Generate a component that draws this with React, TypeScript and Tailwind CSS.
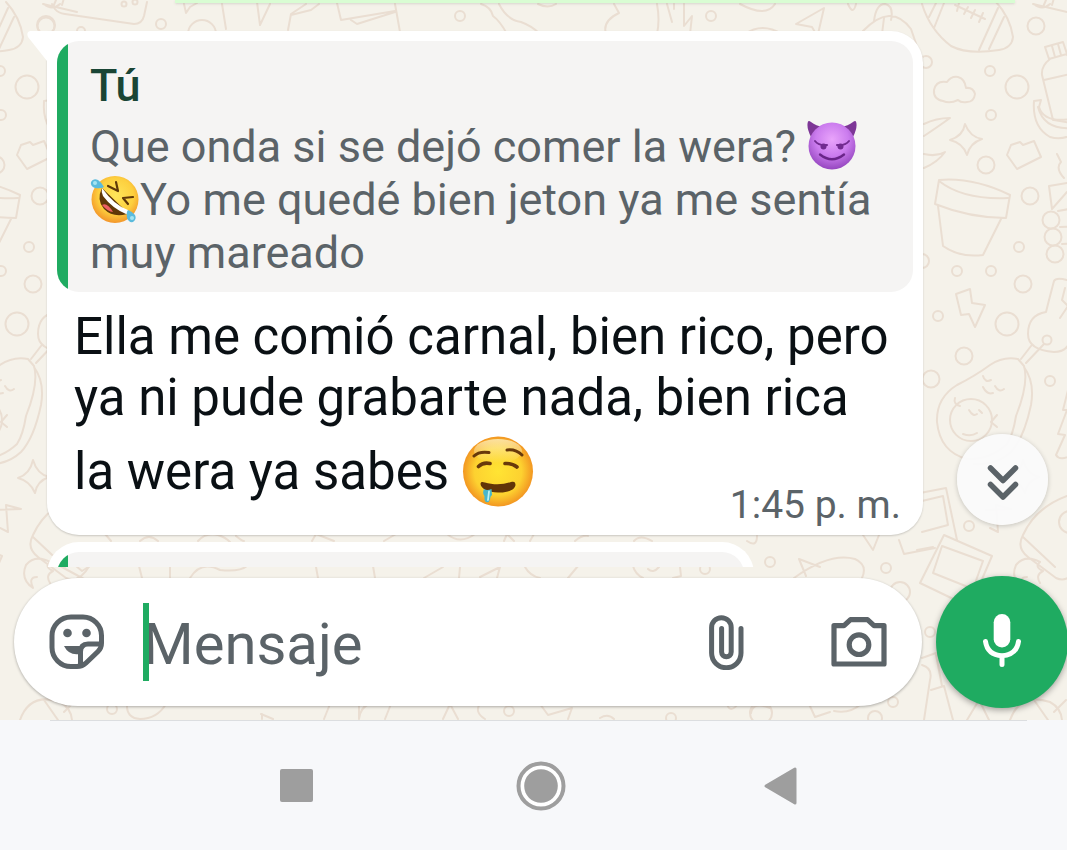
import React from "react";

function Doodles() {
  return (
    <g id="doodles">
      {/* top strip */}
      <path d="M52 4 55 9Q58 13 65 14L134 24Q142 24 144 16L147 2M184 4 186 13 190 7 197 3M222 4 226 29M257 2 260 25 270 4M288 30 291 14 306 4M291 15 311 10 319 4M337 3 341 20 395 11M351 20 357 24 395 12M395 4 400 32" />
      <circle cx="46" cy="25" r="9" />
      <circle cx="81" cy="31" r="4" />
      <circle cx="161" cy="24" r="5" />
      <circle cx="202" cy="34" r="14" />
      <circle cx="124" cy="4" r="2.5" />
      <circle cx="135" cy="2" r="2.5" />
      <circle cx="460" cy="16" r="5" />
      <path d="M481 4Q491 7 493 16 500 21 507 34M499 4Q507 20 521 22 532 26 540 34M538 4Q548 9 556 4M614 4 619 13Q602 21 606 34M657 4Q660 20 657 34M667 4 672 22M674 4 674 9M684 4 684 26 692 16 690 34M740 4Q766 18 775 4M745 34Q762 22 782 34M816 34 812 27 796 24 824 8 818 34M848 4Q853 16 856 4M863 31Q891 2 911 29L922 61M874 21Q876 4 885 4 894 6 891 20M884 18 882 34" />
      <circle cx="711" cy="16" r="5" />

      {/* rugby ball */}
      <path d="M922 4Q930 30 951 46 968 55 999 50 1012 48 1013 37 1010 17 996 2M929 17 936 3M934 28 944 3M979 50 998 8M989 49 1004 17M955 5 985 19M957 11 959 3M964 14 968 7M971 18 975 10M979 22 983 13" />
      <path d="M1034 4Q1042 11 1050 4M1033 4 1067 12M1046 0 1043 7M1054 -2 1052 5" />
      <circle cx="1036" cy="26" r="8.5" />
      <circle cx="990" cy="71" r="5" />
      <circle cx="926" cy="62" r="6" />
      <circle cx="1017" cy="87" r="11.5" />
      <circle cx="991" cy="115" r="5" />
      <circle cx="986" cy="165" r="8.5" />
      <circle cx="1030" cy="196" r="8.5" />
      <circle cx="1019" cy="247" r="5" />
      <circle cx="957" cy="271" r="5" />
      <circle cx="991" cy="271" r="5" />
      <circle cx="1023" cy="284" r="8.5" />
      <circle cx="922" cy="261" r="7" />
      {/* cloud */}
      <path d="M943 101Q933 99 934 90 936 80 947 82 951 76 958 77 965 79 966 88 973 87 975 94 974 102 967 102 961 103 958 100 950 104 943 101Z" />
      {/* bottle */}
      <path d="M1045 47 1063 42 1067 54 1049 59ZM1052 46 1055 57M1058 44 1061 55M1050 59Q1041 66 1042 75L1053 120M1067 55 1078 62M1044 80 1075 73M1054 120 1078 124" />
      {/* bananas */}
      <path d="M1034 101 1041 100 1039 107Q1044 123 1070 119M1034 101Q1032 127 1050 137 1064 141 1076 132M1038 107Q1044 130 1072 128" />
      {/* leaf, star, film */}
      <path d="M924 124Q936 118 950 118 939 126 924 136M924 154Q936 157 945 152 938 162 924 168" />
      <path d="M965 124Q970 137 982 139 970 143 967 155 963 143 950 140 963 136 965 124Z" />
      <path d="M1011 145 1020 142 1023 145 1034 141 1041 157 1017 169 1007 155ZM1057 154 1061 162Q1055 168 1064 178" />
      {/* flower pot */}
      <path d="M939 180Q973 177 1010 195L1006 218Q970 218 935 204ZM939 181Q963 200 1008 198M938 206 943 246Q960 258 983 255L1001 219" />
      {/* logs */}
      <path d="M1049 186 1067 183M1049 186 1052 209 1067 192M1058 211 1080 207M1060 227 1080 226M1062 244 1080 243" />
      <circle cx="1051" cy="220" r="8.5" />
      <circle cx="1053" cy="237" r="8.5" />
      <circle cx="1055" cy="254" r="8.5" />
      <path d="M1049 300 1054 281Q1056 277 1067 280M1065 288 1062 300 1068 306 1060 318" />
      {/* lightning */}
      <path d="M956 294 970 289 972 303 985 305 975 327 969 314 961 315Z" />
      <circle cx="938" cy="316" r="5" />
      <circle cx="1007" cy="324" r="11.5" />
      <circle cx="964" cy="356" r="8.5" />
      <circle cx="931" cy="379" r="8.5" />
      <circle cx="1050" cy="381" r="5" />
      {/* tag */}
      <path d="M1049 300 1046 312Q1028 315 1028 334 1028 350 1054 352 1066 352 1070 342M1044 344 1026 363M1031 346 1021 359" />
      <circle cx="1047" cy="340" r="4.5" />
      {/* avocado */}
      <path d="M1018 359Q1003 356 990 365 975 376 957 385 936 398 937 422 940 452 967 459 990 460 1007 444 1013 435 1016 416 1029 383 1024 366ZM1024 367Q1035 382 1031 405 1024 438 1011 452 996 466 974 464" />
      <circle cx="971" cy="420" r="21" />
      <path d="M983 376Q985 383 991 380M995 386Q999 393 1004 389M983 387Q987 395 993 393M969 410Q973 417 977 414M979 410 982 413M963 434Q971 437 977 433M955 398Q953 404 960 406M997 415 991 422 997 427" />
      {/* fir */}
      <path d="M1068 390 1063 410 1067 410 1058 434 1065 435 1056 455Q1060 462 1074 454" />
      <path d="M1023 460Q1027 474 1039 477 1027 481 1025 493 1020 481 1008 478 1020 474 1023 460ZM990 528 998 532 996 505 1011 509 986 510" />
      <circle cx="969" cy="526" r="5" />
      {/* photos */}
      <path d="M920 493 946 488 957 540M922 501 943 496 948 525 922 532M917 550 933 547M944 535 992 556 970 607 920 583ZM942 546 983 561 973 589 933 573Z" />
      {/* rocket */}
      <path d="M1023 535Q1035 508 1067 496M1023 535Q1016 548 1028 557L1056 578Q1069 584 1080 565M1023 537 1055 567M1016 565Q1025 554 1040 562 1034 567 1043 571 1035 575 1040 583M1016 565Q1010 579 1023 588 1018 577 1027 577" />
      <circle cx="1070" cy="522" r="11" />

      {/* bottom strip */}
      <path d="M98 530 106 535 111 541M140 541Q149 533 158 541M198 541Q206 532 218 535 225 537 230 542M236 536Q242 541 244 541M312 541 316 534 334 541M384 541 396 534M447 534Q460 545 475 534M504 541 507 534 514 541M530 541 534 534M575 541Q582 535 588 536M634 541Q640 534 652 541M747 541Q757 548 757 536M863 535 873 550 879 535M899 540 904 554 935 548" />
      <path d="M60 566 84 579M76 566 82 571 90 566M139 566 142 578M170 566V578M190 578Q201 560 220 570 240 572 247 566M316 567 318 578M373 566 375 578M424 578 443 567M460 567 459 578M480 577 500 567 497 578M525 567Q530 576 540 578M568 578 578 566M633 566Q635 574 643 578M648 569Q653 574 659 567M673 578 681 576 680 567M794 578Q830 552 855 559 868 565 862 578M806 576 799 559 820 567" />
      <circle cx="770" cy="562" r="5" />
      <circle cx="705" cy="569" r="5" />
      <circle cx="886" cy="568" r="5" />
      <circle cx="900" cy="592" r="10" />
      <circle cx="930" cy="632" r="5" />
      <path d="M922 658 936 653M922 665Q933 668 930 680L924 720M931 690 944 686 953 720M936 655 942 686M967 720 979 700 989 720M1010 720Q1020 692 1050 702 1061 708 1062 720M1034 700 1048 720M1066 700 1054 712" />
      <path d="M127 704Q126 718 140 719 157 719 166 704M261 714 273 719M262 714V719M330 704 324 719M359 704V719M359 719Q360 708 369 704M385 719 391 704M443 719 450 704 458 719M480 704Q474 712 485 719M540 704 548 715 572 708 568 719M600 718Q608 713 614 719M727 704Q730 714 738 704M751 713Q753 701 770 708M809 704 815 717 830 712M834 711Q850 714 861 704" />
      <circle cx="112" cy="709" r="5" />
      <circle cx="509" cy="711" r="5" />
      <circle cx="671" cy="718" r="5" />
      <circle cx="761" cy="713" r="11" />
      <circle cx="893" cy="702" r="5" />
      <circle cx="875" cy="718" r="7" />
    </g>
  );
}

function Wallpaper() {
  return (
    <svg
      className="absolute inset-0 h-full w-full"
      viewBox="0 0 1067 720"
      preserveAspectRatio="xMidYMid slice"
      fill="none"
      stroke="#eaded2"
      strokeWidth="2"
      strokeLinecap="round"
      strokeLinejoin="round"
      aria-hidden="true"
    >
      <Doodles />
      <use href="#doodles" x="-990" />
    </svg>
  );
}

function DevilEmoji() {
  return (
    <svg className="-mb-2 inline-block size-[50px] align-baseline" viewBox="0 0 50 50" role="img" aria-label="😈">
      <defs>
        <radialGradient id="devil" cx="50%" cy="36%" r="64%">
          <stop offset="0" stopColor="#e9a4fb" />
          <stop offset="0.55" stopColor="#cb7cee" />
          <stop offset="1" stopColor="#9546bf" />
        </radialGradient>
      </defs>
      <path d="M4 17Q-1 7 1 1.500 2 .5 4 2 9 6 16 7ZM46 17Q51 7 49 1.500 48 .5 46 2 41 6 34 7Z" fill="#7d3696" />
      <circle cx="25" cy="26" r="23.500" fill="url(#devil)" />
      <path d="M8 21Q12 26 20 25M42 21Q38 26 30 25" fill="none" stroke="#722b90" strokeWidth="2" strokeLinecap="round" />
      <circle cx="16.500" cy="26.500" r="3" fill="#722b90" />
      <circle cx="33.500" cy="26.500" r="3" fill="#722b90" />
      <path d="M13 34.500Q25 44 37 34.500" fill="none" stroke="#6a2489" strokeWidth="2.400" strokeLinecap="round" />
    </svg>
  );
}

function RoflEmoji() {
  return (
    <svg className="-mb-[9px] inline-block size-[50px] align-baseline" viewBox="0 0 50 50" role="img" aria-label="🤣">
      <defs>
        <radialGradient id="rofl" cx="52%" cy="42%" r="58%">
          <stop offset="0" stopColor="#ffe65a" />
          <stop offset="0.65" stopColor="#fdcf3e" />
          <stop offset="1" stopColor="#f3962a" />
        </radialGradient>
      </defs>
      <circle cx="25" cy="25.500" r="23.500" fill="url(#rofl)" />
      <path d="M12 14Q6 26 14 35 23 44 37 40 40 39 37 38Z" fill="#603808" />
      <path d="M12 14Q11 18 13 22 22 34 36 40 41 40 38 36 24 31 12 14Z" fill="#fff" />
      <path d="M12 31Q17 28 23 38 18 38 12 31Z" fill="#ee5f63" />
      <path d="M18 12 28 17 26 8M43 23 33 24 38 30" fill="none" stroke="#603808" strokeWidth="2.200" strokeLinecap="round" strokeLinejoin="round" />
      <path d="M14 13Q11 15 5 14 0 12 1 8 3 4 8 6 11 8 14 13Z" fill="#5bbbdc" />
      <path d="M38 36Q36 38 37 44 39 49 43 48 47 45 45 41 43 38 38 36Z" fill="#5bbbdc" />
      <circle cx="5" cy="9" r="2" fill="#a4e4f2" />
      <circle cx="42" cy="44" r="2" fill="#a4e4f2" />
    </svg>
  );
}

function DroolEmoji() {
  return (
    <svg className="-mb-[19px] mt-2 inline-block size-[72px] align-baseline" viewBox="0 0 72 72" role="img" aria-label="🤤">
      <defs>
        <radialGradient id="drool" cx="50%" cy="50%" r="52%">
          <stop offset="0" stopColor="#ffe433" />
          <stop offset="0.65" stopColor="#fdd130" />
          <stop offset="1" stopColor="#f18f20" />
        </radialGradient>
        <linearGradient id="shine" x1="0" y1="0" x2="0" y2="1">
          <stop offset="0" stopColor="#fff6c8" stopOpacity="0.75" />
          <stop offset="1" stopColor="#fff6c8" stopOpacity="0" />
        </linearGradient>
      </defs>
      <circle cx="36" cy="35.500" r="35" fill="url(#drool)" />
      <ellipse cx="36" cy="15" rx="24" ry="12" fill="url(#shine)" />
      <g fill="none" stroke="#68390b" strokeLinecap="round">
        <path d="M12 20Q17 15 27 16.500M45 14Q54 13 60 19" strokeWidth="3" />
        <path d="M16.500 30.500Q21 26 28 27.500M43 27.500Q50 27 55 31" strokeWidth="3.600" />
      </g>
      <path d="M18.500 48C18.500 45.500 20.500 45.500 23 46.500 31 49 41 49 49 46 52 45 53.500 46 53.500 49 53 54 45 57 36 56.500 26 56 19 53 18.500 48Z" fill="#623408" />
      <path d="M22 53Q25 55 29.500 53L30 59Q28 60 28 63.500 27 67 24 66 22 65 22.500 60 20 57 22 53Z" fill="#48b6cc" />
      <path d="M27 55.500 26 64" stroke="#bdf0f2" strokeWidth="1.800" strokeLinecap="round" />
    </svg>
  );
}

function StickerIcon() {
  return (
    <svg className="size-[56px]" viewBox="0 0 56 56" fill="none" stroke="#5b6368" strokeWidth="5" aria-hidden="true">
      <path d="M22 3H34A18.500 18.500 0 0 1 52.500 21.500V29Q52.500 34 49 37.500L37 49Q33.500 52.500 28 52.500H22A19 19 0 0 1 3 33.500V22A19 19 0 0 1 22 3Z" />
      <path d="M52 30H39Q31.500 30 31.500 38V52" />
      <circle cx="18.500" cy="19" r="4.300" fill="#5b6368" stroke="none" />
      <circle cx="37.500" cy="19" r="4.300" fill="#5b6368" stroke="none" />
      <path d="M15 32H35L31 40Q20 42 15 32Z" fill="#5b6368" stroke="none" />
    </svg>
  );
}

function ClipIcon() {
  return (
    <svg className="size-[56px]" viewBox="-9 0 56 56" fill="none" stroke="#5b6368" strokeWidth="5" strokeLinecap="round" aria-hidden="true">
      <path d="M34 14.500V39A14.700 14.700 0 0 1 4.600 39V13.500A9.800 9.800 0 0 1 24.200 13.500V38A4.800 4.800 0 0 1 14.600 38V14.500" />
    </svg>
  );
}

function CameraIcon() {
  return (
    <svg className="size-[56px]" viewBox="0 -2 56 56" fill="none" stroke="#5b6368" strokeWidth="5.200" strokeLinejoin="round" aria-hidden="true">
      <path d="M3 9.700H13L19.500 3.700H36.500L43 9.700H53V48H3Z" />
      <circle cx="28" cy="28.700" r="9.800" />
    </svg>
  );
}

export default function App() {
  return (
    <div className="flex h-screen flex-col overflow-hidden bg-[#f7f8fa] font-['Roboto','Noto_Sans',sans-serif]">
      <main className="relative flex min-h-0 flex-1 flex-col overflow-hidden bg-[#f5f2ea]">
        <Wallpaper />

        <section className="relative min-h-0 flex-1 overflow-hidden" aria-label="Conversación">
          <div className="ml-[175px] mr-[52px] h-[3px] bg-[#d9fdd3] shadow-sm" />

          <article className="relative ml-[47px] mr-[144px] mt-7 rounded-[32px] rounded-tl-none bg-white px-[10px] pb-[6px] pt-[10px] shadow-[0_1px_2px_rgba(0,0,0,0.18)]">
            <svg className="absolute -left-5 top-0 h-8 w-6" viewBox="0 0 24 32" fill="#fff" aria-hidden="true">
              <path d="M24 0H3Q-1 1 1 6L20 30 24 32Z" />
            </svg>
            <blockquote className="flex overflow-hidden rounded-[22px] bg-[#f5f4f3] text-[45px] leading-[53px] text-[#5b6368]">
              <span className="w-[11px] shrink-0 bg-[#1fab61]" />
              <div className="min-w-0 flex-1 pb-[13px] pl-[22px] pr-7 pt-[18px]">
                <p className="mb-2 font-medium text-[#1a4535]">Tú</p>
                <p>
                  Que onda si se dejó comer la wera? <DevilEmoji />
                  <br />
                  <RoflEmoji />
                  Yo me quedé bien jeton ya me sentía muy mareado
                </p>
              </div>
            </blockquote>
            <div className="mt-[14px] grid">
              <p className="col-start-1 row-start-1 pb-[27px] pl-[17px] text-[51px] leading-[61px] text-[#0a1014]">
                Ella me comió carnal, bien rico, pero
                <br />
                ya ni pude grabarte nada, bien rica
                <br />
                la wera ya sabes <DroolEmoji />
              </p>
              <time className="col-start-1 row-start-1 self-end justify-self-end pr-3 text-[39px] leading-[48px] text-[#5b6368]">
                1:45 p. m.
              </time>
            </div>
          </article>

          <article className="ml-[47px] mt-[7px] h-32 w-[707px] max-w-full rounded-[32px] bg-white p-[10px]">
            <div className="flex h-full overflow-hidden rounded-[22px] bg-[#f5f4f3]">
              <span className="w-[11px] shrink-0 bg-[#1fab61]" />
            </div>
          </article>
        </section>

        <button
          type="button"
          aria-label="Ir al final"
          className="absolute bottom-[195px] right-[19px] flex size-[91px] items-center justify-center rounded-full bg-[#fafafb]/95 shadow-[0_1px_5px_rgba(0,0,0,0.2)]"
        >
          <svg className="size-[91px]" viewBox="0 0 91 91" fill="none" stroke="#5b6368" strokeWidth="5.500" strokeLinecap="round" strokeLinejoin="round" aria-hidden="true">
            <path d="M33.500 34 46 46.500 58.500 34M33.500 50.500 46 63 58.500 50.500" />
          </svg>
        </button>

        <form className="relative -mr-px flex items-center gap-[14px] pb-3 pl-[14px] pt-[9px]">
          <div className="flex h-32 min-w-0 flex-1 items-center rounded-full bg-white px-[35px] shadow-[0_1px_3px_rgba(0,0,0,0.3)]">
            <button type="button" aria-label="Stickers" className="shrink-0">
              <StickerIcon />
            </button>
            <div className="relative ml-[38px] min-w-0 flex-1">
              <input
                type="text"
                aria-label="Mensaje"
                placeholder="Mensaje"
                className="block h-[78px] w-full bg-transparent pt-1 text-[58px] text-[#0a1014] caret-[#1fab61] outline-none placeholder:text-[#5b6368] placeholder:opacity-100"
              />
              <span className="absolute inset-y-0 left-0 w-[6px] bg-[#1fab61]" />
            </div>
            <button type="button" aria-label="Adjuntar" className="shrink-0">
              <ClipIcon />
            </button>
            <button type="button" aria-label="Cámara" className="ml-[77px] shrink-0">
              <CameraIcon />
            </button>
          </div>
          <button
            type="button"
            aria-label="Mensaje de voz"
            className="size-[132px] shrink-0 rounded-full bg-[#1fab61] shadow-[0_2px_6px_rgba(0,0,0,0.35)]"
          >
            <svg className="size-[132px]" viewBox="0 0 132 132" fill="none" stroke="#fff" strokeWidth="5" strokeLinecap="round" aria-hidden="true">
              <rect x="57.700" y="38" width="16.600" height="33.500" rx="8.300" fill="#fff" stroke="none" />
              <path d="M49.500 65.500Q51.500 79 66 79.700 80.500 79 82.500 65.500M66 80V88.500" />
            </svg>
          </button>
        </form>
      </main>

      <div className="ml-[50px] mr-10 h-px bg-[#dcdee0]" />
      <nav className="flex h-[129px] shrink-0 items-center justify-center gap-[194px] pl-[14px]" aria-label="Sistema">
        <button type="button" aria-label="Recientes">
          <svg className="size-[50px]" viewBox="0 0 50 50" aria-hidden="true">
            <rect x="8" y="8" width="33" height="33" rx="2" fill="#9e9e9e" />
          </svg>
        </button>
        <button type="button" aria-label="Inicio">
          <svg className="size-[50px]" viewBox="0 0 50 50" aria-hidden="true">
            <circle cx="25" cy="25" r="22.500" fill="#fff" stroke="#9e9e9e" strokeWidth="4" />
            <circle cx="25" cy="25" r="16.800" fill="#9e9e9e" />
          </svg>
        </button>
        <button type="button" aria-label="Atrás">
          <svg className="size-[50px]" viewBox="0 0 50 50" aria-hidden="true">
            <path d="M6 25 35 8V42Z" fill="#9e9e9e" stroke="#9e9e9e" strokeWidth="3" strokeLinejoin="round" />
          </svg>
        </button>
      </nav>
    </div>
  );
}
